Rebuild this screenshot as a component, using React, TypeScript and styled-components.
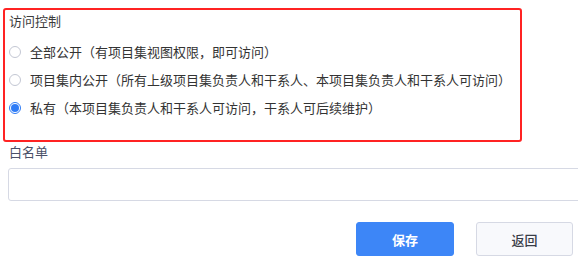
import React, {useState} from 'react';
import styled, {createGlobalStyle} from 'styled-components';

const GlobalStyle = createGlobalStyle`
  html, body {
    margin: 0;
    padding: 0;
    background: #ffffff;
    overflow: hidden;
  }
  body {
    font-family: "Noto Sans CJK SC", "Noto Sans", sans-serif;
    font-size: 13px;
    color: #333333;
  }
`;

type Access = 'public' | 'inner' | 'private';

const options: {value: Access; label: string}[] = [
  {value: 'public', label: '全部公开（有项目集视图权限，即可访问）'},
  {value: 'inner', label: '项目集内公开（所有上级项目集负责人和干系人、本项目集负责人和干系人可访问）'},
  {value: 'private', label: '私有（本项目集负责人和干系人可访问，干系人可后续维护）'},
];

export default function App() {
  const [access, setAccess] = useState<Access>('private');

  return (
    <Page>
      <GlobalStyle />
      <Section>
        <SectionTitle>访问控制</SectionTitle>
        <RadioGroup>
          {options.map((o) => (
            <RadioRow key={o.value} onClick={() => setAccess(o.value)}>
              <Radio checked={access === o.value} />
              <RadioText>{o.label}</RadioText>
            </RadioRow>
          ))}
        </RadioGroup>
      </Section>
      <Field>
        <FieldLabel>白名单</FieldLabel>
        <Input />
      </Field>
      <Actions>
        <Button primary>保存</Button>
        <Button>返回</Button>
      </Actions>
    </Page>
  );
}

const Page = styled.div`
  width: 578px;
  height: 261px;
  padding-top: 8px;
  box-sizing: border-box;
  display: flex;
  flex-direction: column;
`;

const Section = styled.div`
  margin-left: 3px;
  width: 519px;
  height: 134px;
  box-sizing: border-box;
  border: 2px solid #ff2323;
  border-radius: 3px;
  padding: 1px 0 0 4px;
  display: flex;
  flex-direction: column;
`;

const SectionTitle = styled.div`
  height: 20px;
  line-height: 20px;
  font-size: 13px;
  color: #3c3c3c;
`;

const RadioGroup = styled.div`
  margin-top: 7px;
  display: flex;
  flex-direction: column;
`;

const RadioRow = styled.label`
  height: 28px;
  display: flex;
  align-items: center;
  cursor: pointer;
  padding-left: 0;
`;

const Radio = styled.span<{checked?: boolean}>`
  width: 12px;
  height: 12px;
  box-sizing: border-box;
  border-radius: 50%;
  margin-left: 0;
  margin-right: 9px;
  border: 1px solid ${({checked}) => (checked ? '#2f7cf6' : '#c3c7d3')};
  background: #ffffff;
  display: flex;
  align-items: center;
  justify-content: center;
  &::after {
    content: '';
    width: 8px;
    height: 8px;
    border-radius: 50%;
    background: ${({checked}) => (checked ? '#2f7cf6' : 'transparent')};
  }
`;

const RadioText = styled.span`
  font-size: 13px;
  line-height: 20px;
  color: #333333;
  white-space: nowrap;
`;

const Field = styled.div`
  display: flex;
  flex-direction: column;
  padding-left: 8px;
`;

const FieldLabel = styled.div`
  height: 20px;
  line-height: 20px;
  padding-left: 1px;
  font-size: 13px;
  color: #4a5068;
`;

const Input = styled.div`
  margin-top: 6px;
  width: 590px;
  height: 33px;
  box-sizing: border-box;
  border: 1px solid #d6d9e4;
  border-radius: 3px;
  background: #ffffff;
`;

const Actions = styled.div`
  margin-top: 21px;
  display: flex;
  justify-content: flex-end;
  gap: 22px;
  padding-right: 5px;
`;

const Button = styled.button<{primary?: boolean}>`
  width: ${({primary}) => (primary ? '98px' : '97px')};
  height: 34px;
  box-sizing: border-box;
  border-radius: 3px;
  font-family: "Noto Sans CJK SC", "Noto Sans", sans-serif;
  font-size: 13px;
  font-weight: ${({primary}) => (primary ? 700 : 500)};
  color: ${({primary}) => (primary ? '#ffffff' : '#3a3d48')};
  background: ${({primary}) => (primary ? '#3d86f7' : '#f8f9fc')};
  border: 1px solid ${({primary}) => (primary ? '#3d86f7' : '#d6d9e4')};
  cursor: pointer;
  padding: 0;
`;
